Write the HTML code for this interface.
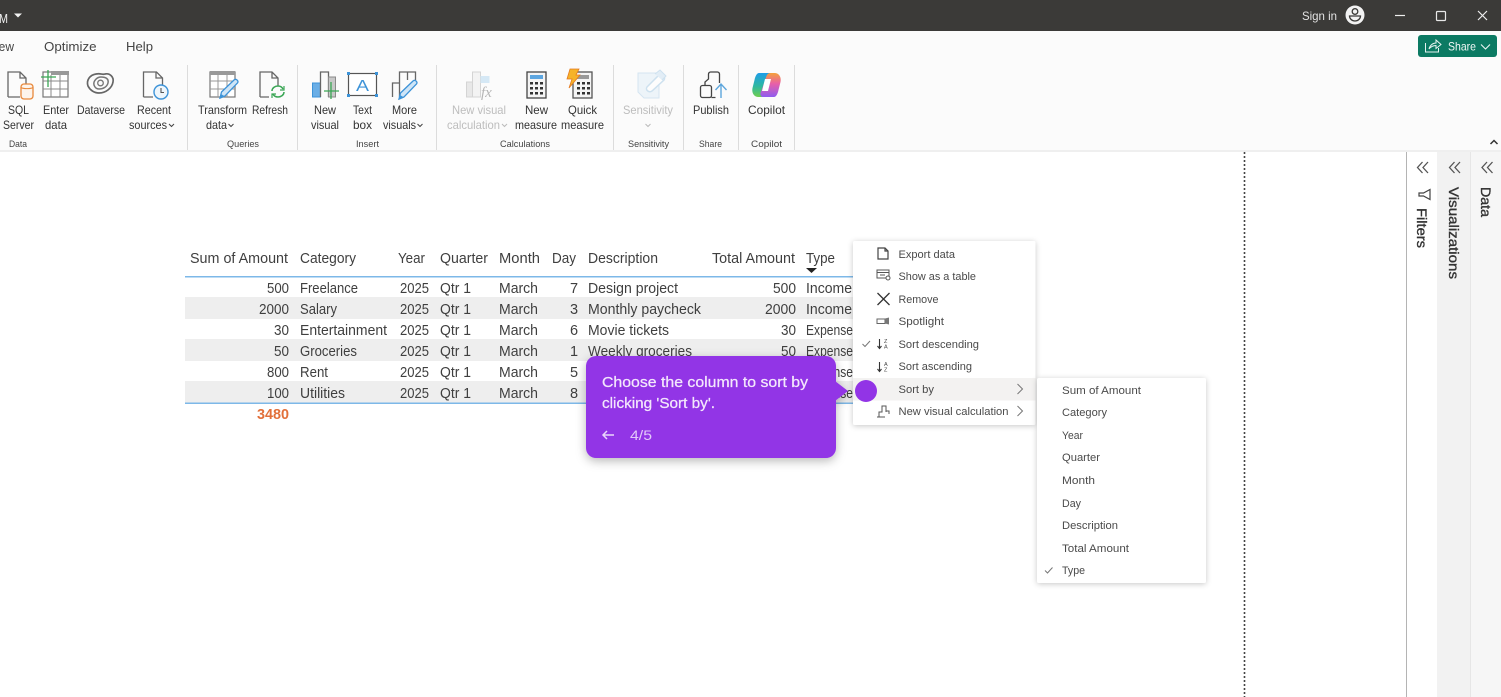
<!DOCTYPE html>
<html lang="en"><head><meta charset="utf-8"><title>Power BI</title>
<style>
html,body{margin:0;padding:0;background:#fff;width:1501px;height:697px;overflow:hidden}
svg{display:block;font-family:"Liberation Sans",sans-serif;filter:blur(.3px)}
.r text{font-size:12px;fill:#333}
.g text{font-size:9.5px;fill:#444}
.d text{font-size:12px;fill:#bdbdbd}
.t text{font-size:14.5px;fill:#3f3f3f}
.m text{font-size:11px;fill:#4a4a4a}
.i{fill:none;stroke:#666;stroke-width:1.3}
</style></head><body>
<svg width="1501" height="697" viewBox="0 0 1501 697" xmlns="http://www.w3.org/2000/svg">
<defs>
<filter id="s" x="-20%" y="-20%" width="140%" height="140%"><feDropShadow dx="0" dy="1" stdDeviation="3" flood-color="#000" flood-opacity=".22"/></filter>
<filter id="s2" x="-20%" y="-20%" width="140%" height="150%"><feDropShadow dx="0" dy="3" stdDeviation="5" flood-color="#000" flood-opacity=".28"/></filter>
<linearGradient id="cl" x1="0" y1="0" x2="0" y2="1"><stop offset="0" stop-color="#1f9de8"/><stop offset=".55" stop-color="#2fb8a0"/><stop offset="1" stop-color="#6fce4f"/></linearGradient>
<linearGradient id="cr" x1="0" y1="0" x2="0" y2="1"><stop offset="0" stop-color="#f5a13a"/><stop offset=".45" stop-color="#e85fa8"/><stop offset="1" stop-color="#8f5cf0"/></linearGradient>
</defs>
<rect width="1501" height="697" fill="#fff"/>

<!-- ribbon -->
<rect y="31" width="1501" height="119" fill="#fbfbfb"/>
<rect y="150" width="1501" height="2" fill="#efefef"/>
<rect width="1501" height="31" fill="#3b3a38"/>
<text x="-1" y="23" font-size="13" fill="#eee" textLength="9" lengthAdjust="spacingAndGlyphs">M</text>
<path d="M14 13.5h8l-4 4z" fill="#f2f2f2"/>
<text x="1302" y="20" font-size="12" fill="#e3e3e3" textLength="35" lengthAdjust="spacingAndGlyphs">Sign in</text>
<circle cx="1355" cy="15" r="9.5" fill="#f2f2f2"/>
<circle cx="1355" cy="11.5" r="2.8" fill="none" stroke="#3b3a38" stroke-width="1.3"/>
<path d="M1349.5 16h11a5.5 5 0 0 1-11 0z" fill="none" stroke="#3b3a38" stroke-width="1.3"/>
<path d="M1395 15.5h10" stroke="#eee" stroke-width="1.2"/>
<rect x="1436.5" y="11.5" width="9" height="9" rx="1" fill="none" stroke="#e8e8e8" stroke-width="1.2"/>
<path d="M1478 11l9 9M1487 11l-9 9" stroke="#eee" stroke-width="1.2"/>

<text x="-4" y="51" font-size="13" fill="#444" textLength="18" lengthAdjust="spacingAndGlyphs">iew</text>
<text x="44" y="51" font-size="13" fill="#444" textLength="52.5" lengthAdjust="spacingAndGlyphs">Optimize</text>
<text x="126" y="51" font-size="13" fill="#444" textLength="27" lengthAdjust="spacingAndGlyphs">Help</text>

<rect x="1418" y="35" width="79" height="22" rx="3" fill="#0c7a63"/>
<path d="M1425.5 43v9h13v-4M1429 49c1-4 4-6 7-6v-3l5 4.5-5 4v-3c-3 0-5 1-7 3.500z" fill="none" stroke="#e6f3f0" stroke-width="1"/>
<text x="1448" y="50.500" font-size="12" fill="#eef7f5" textLength="28" lengthAdjust="spacingAndGlyphs">Share</text>
<path d="M1481 44.500l4.500 4.500 4.500-4.500" fill="none" stroke="#eef7f5" stroke-width="1.1"/>
<path d="M1490.500 144l3.500-3.500 3.500 3.500" fill="none" stroke="#333" stroke-width="1.5"/>

<!-- separators -->
<g stroke="#dcdcdc" stroke-width="1">
<path d="M187.500 65v85M297.500 65v85M436.500 65v85M613.500 65v85M683.500 65v85M738.500 65v85M794.500 65v85"/>
</g>

<!-- icons: data -->
<path class="i" d="M8 97V72h12l6 6v7M26 78h-6v-6M20 97H8"/>
<rect x="21" y="84" width="12" height="15" rx="3" fill="#fdf4ec" stroke="#e8893c" stroke-width="1.3"/>
<path d="M21 87.500c2 1.500 10 1.500 12 0" fill="none" stroke="#e8893c" stroke-width="1.100"/>
<rect x="43" y="72" width="25" height="25" fill="#fff" stroke="#777" stroke-width="1.200"/>
<rect x="51" y="71" width="18" height="4" fill="#999"/>
<path d="M43 81h25M43 89h25M51 75v22M60 75v22" stroke="#888" stroke-width="1"/>
<path d="M48 70v17M41 77h15" stroke="#3aa655" stroke-width="1.300"/>
<path d="M88 86c-2-6 2-11 8-12 5-1 6 1 9 0 5-1 9 3 8 8-1 6-7 11-14 11-5 0-9-3-11-7z" fill="none" stroke="#666" stroke-width="1.700"/>
<path d="M94 85c-1-4 3-8 7-8 5 0 8 2 7 6-1 4-5 6-9 6-2 0-4-1-5-4z" fill="none" stroke="#777" stroke-width="1.500"/>
<circle cx="100.500" cy="83" r="2.800" fill="none" stroke="#777" stroke-width="1.300"/>
<path class="i" d="M143.500 97V72h13l6 6v10M162 78h-6v-6M143.500 97H153"/>
<circle cx="161" cy="92" r="7" fill="#eef6fc" stroke="#3d93d8" stroke-width="1.400"/>
<path d="M161 88v4.500h3" fill="none" stroke="#555" stroke-width="1.100"/>

<!-- queries -->
<rect x="210" y="72" width="25" height="25" fill="#fff" stroke="#777" stroke-width="1.200"/>
<rect x="210" y="71" width="25" height="4" fill="#999"/>
<path d="M210 81h25M210 89h25M218 75v22M227 75v22" stroke="#999" stroke-width="1"/>
<path d="M220 98l1.500-6L234 80c2-2 5 1 3.500 3L225 96z" fill="#cfe5f7" stroke="#3d93d8" stroke-width="1.300"/>
<path d="M219.500 99l1.500-5 4 2.500z" fill="#3d93d8"/>
<path class="i" d="M260 97V72h12l6 6v8M278 78h-6v-6M260 97h9"/>
<path d="M272 91c0-3 3-5 6-5 2 0 4 1 5 3M284 92c0 3-3 5-6 5-2 0-4-1-5-3" fill="none" stroke="#3aa655" stroke-width="1.500"/>
<path d="M284 86v4h-4M272 98v-4h4" fill="none" stroke="#3aa655" stroke-width="1.200"/>

<!-- insert -->
<rect x="312.500" y="83" width="8" height="14" fill="#6aaee6" stroke="#3d93d8"/>
<path class="i" d="M320.500 97V72h8v25"/>
<rect x="328.500" y="77" width="7" height="20" fill="#c8c8c8" stroke="#8a8a8a"/>
<path d="M331 82v17M324 91h15" stroke="#3aa655" stroke-width="1.300"/>
<rect x="348.500" y="73.500" width="28" height="22" fill="#fff" stroke="#555" stroke-width="1.200"/>
<g fill="#3d93d8"><rect x="347" y="72" width="3" height="3"/><rect x="375" y="72" width="3" height="3"/><rect x="347" y="94" width="3" height="3"/><rect x="375" y="94" width="3" height="3"/></g>
<text x="356" y="91" font-size="16" fill="#3d93d8" textLength="13" lengthAdjust="spacingAndGlyphs">A</text>
<path class="i" d="M392.500 97V83h7M399.500 97V72h8v8M407.500 72h8v8"/>
<path d="M399 99l1.500-6L413 81c2-2 5 1 3.500 3L404 97z" fill="#cfe5f7" stroke="#3d93d8" stroke-width="1.300"/>
<path d="M398.500 100l1.500-5 4 2.500z" fill="#3d93d8"/>

<!-- calculations -->
<g opacity=".6">
<rect x="466.500" y="82" width="6" height="15" fill="#ddd" stroke="#bbb"/>
<rect x="472.500" y="72" width="8" height="25" fill="#eee" stroke="#bbb"/>
<rect x="480.500" y="76" width="9" height="7" fill="#bcdcf2"/>
<text x="481" y="97" font-size="15" font-style="italic" font-family="Liberation Serif" fill="#888">fx</text>
</g>
<rect x="527" y="72" width="19" height="26" fill="#f4f4f4" stroke="#444" stroke-width="1.300"/>
<rect x="530" y="75" width="13" height="4" fill="#5da6e0"/>
<g fill="#333"><rect x="530" y="82" width="3" height="2.500"/><rect x="535" y="82" width="3" height="2.500"/><rect x="540" y="82" width="3" height="2.500"/><rect x="530" y="87" width="3" height="2.500"/><rect x="535" y="87" width="3" height="2.500"/><rect x="540" y="87" width="3" height="2.500"/><rect x="530" y="92" width="3" height="2.500"/><rect x="535" y="92" width="3" height="2.500"/><rect x="540" y="92" width="3" height="2.500"/></g>
<rect x="573" y="72" width="19" height="26" fill="#f4f4f4" stroke="#555" stroke-width="1.300"/>
<rect x="576" y="75" width="13" height="4" fill="#999"/>
<g fill="#333"><rect x="577" y="82" width="3" height="2.500"/><rect x="582" y="82" width="3" height="2.500"/><rect x="587" y="82" width="3" height="2.500"/><rect x="577" y="87" width="3" height="2.500"/><rect x="582" y="87" width="3" height="2.500"/><rect x="587" y="87" width="3" height="2.500"/><rect x="577" y="92" width="3" height="2.500"/><rect x="582" y="92" width="3" height="2.500"/><rect x="587" y="92" width="3" height="2.500"/></g>
<path d="M570 69h9l-3 6h4l-11 13 3-9h-5z" fill="#f5b32a" stroke="#e57a1e" stroke-width=".8"/>

<!-- sensitivity -->
<g opacity=".55">
<path d="M638 73h21v25h-15l-6-6z" fill="#e3eff8" stroke="#b7d4ea"/>
<path d="M647 87l12-12c3-2 7 2 5 5l-12 11c-3 2-7-1-5-4z" fill="#fff" stroke="#a9cce6" stroke-width="1.500"/>
<path d="M655 74l5-4 6 6-4 4" fill="#cfe3f2" stroke="#a9cce6"/>
</g>

<!-- publish -->
<rect x="700.500" y="85.500" width="11" height="12" rx="2" fill="none" stroke="#444" stroke-width="1.300"/>
<path d="M705 85v-3l3.500-3V74c0-1 1-2 2-2h7c1 0 2 1 2 2v9M711.500 97.500h4" fill="none" stroke="#444" stroke-width="1.300"/>
<path d="M721 98V84M715.500 90l5.500-6 5.500 6" fill="none" stroke="#5ea6dc" stroke-width="1.400"/>

<!-- copilot -->
<path d="M759 73h11c2 0 3 2 2.500 4l-6 17c-.7 2-2 3-4 3h-4c-4.500 0-7-4-6-9l2-8c.8-4 2.500-7 4.500-7z" fill="url(#cl)"/>
<path d="M774 97h-11c-2 0-3-2-2.500-4l6-17c.7-2 2-3 4-3h4c4.500 0 7 4 6 9l-2 8c-.8 4-2.500 7-4.500 7z" fill="url(#cr)" transform="rotate(0)"/>
<path d="M765 79h6l-3 12h-6z" fill="#fff"/>

<!-- ribbon labels -->
<g class="r">
<text x="8" y="114" textLength="21" lengthAdjust="spacingAndGlyphs">SQL</text>
<text x="3" y="129" textLength="31" lengthAdjust="spacingAndGlyphs">Server</text>
<text x="43" y="114" textLength="26" lengthAdjust="spacingAndGlyphs">Enter</text>
<text x="45" y="129" textLength="22" lengthAdjust="spacingAndGlyphs">data</text>
<text x="77" y="114" textLength="48" lengthAdjust="spacingAndGlyphs">Dataverse</text>
<text x="137" y="114" textLength="34" lengthAdjust="spacingAndGlyphs">Recent</text>
<text x="129" y="129" textLength="38" lengthAdjust="spacingAndGlyphs">sources</text>
<text x="198" y="114" textLength="49" lengthAdjust="spacingAndGlyphs">Transform</text>
<text x="206" y="129" textLength="21" lengthAdjust="spacingAndGlyphs">data</text>
<text x="252" y="114" textLength="36" lengthAdjust="spacingAndGlyphs">Refresh</text>
<text x="314" y="114" textLength="22" lengthAdjust="spacingAndGlyphs">New</text>
<text x="311" y="129" textLength="28" lengthAdjust="spacingAndGlyphs">visual</text>
<text x="353" y="114" textLength="19" lengthAdjust="spacingAndGlyphs">Text</text>
<text x="353" y="129" textLength="19" lengthAdjust="spacingAndGlyphs">box</text>
<text x="392" y="114" textLength="25" lengthAdjust="spacingAndGlyphs">More</text>
<text x="383" y="129" textLength="33" lengthAdjust="spacingAndGlyphs">visuals</text>
<text x="525" y="114" textLength="23" lengthAdjust="spacingAndGlyphs">New</text>
<text x="515" y="129" textLength="42" lengthAdjust="spacingAndGlyphs">measure</text>
<text x="568" y="114" textLength="29" lengthAdjust="spacingAndGlyphs">Quick</text>
<text x="561" y="129" textLength="43" lengthAdjust="spacingAndGlyphs">measure</text>
<text x="693" y="114" textLength="36" lengthAdjust="spacingAndGlyphs">Publish</text>
<text x="748" y="114" textLength="37" lengthAdjust="spacingAndGlyphs">Copilot</text>
</g>
<g class="d">
<text x="452" y="114" textLength="54" lengthAdjust="spacingAndGlyphs">New visual</text>
<text x="447" y="129" textLength="53" lengthAdjust="spacingAndGlyphs">calculation</text>
<text x="623" y="114" textLength="50" lengthAdjust="spacingAndGlyphs">Sensitivity</text>
</g>
<g fill="none" stroke="#444" stroke-width="1">
<path d="M169 124l2.500 2.500 2.500-2.500M228.500 124l2.500 2.500 2.500-2.500M417.500 124l2.500 2.500 2.500-2.500"/>
<path stroke="#bbb" d="M502 124l2.500 2.500 2.500-2.500M645.500 124l2.500 2.500 2.500-2.500"/>
</g>
<g class="g">
<text x="9" y="147" textLength="18" lengthAdjust="spacingAndGlyphs">Data</text>
<text x="227" y="147" textLength="32" lengthAdjust="spacingAndGlyphs">Queries</text>
<text x="356" y="147" textLength="23" lengthAdjust="spacingAndGlyphs">Insert</text>
<text x="500" y="147" textLength="50" lengthAdjust="spacingAndGlyphs">Calculations</text>
<text x="628" y="147" textLength="41" lengthAdjust="spacingAndGlyphs">Sensitivity</text>
<text x="699" y="147" textLength="23" lengthAdjust="spacingAndGlyphs">Share</text>
<text x="751" y="147" textLength="31" lengthAdjust="spacingAndGlyphs">Copilot</text>
</g>

<!-- canvas and panes -->
<path d="M1244.500 152V697" stroke="#444" stroke-width="1.600" stroke-dasharray="2 2"/>
<rect x="1406" y="152" width="1" height="545" fill="#b4b4b4"/>
<rect x="1437" y="152" width="34" height="545" fill="#f2f2f2"/>
<rect x="1470" y="152" width="1" height="545" fill="#e6e6e6"/>
<rect x="1471" y="152" width="30" height="545" fill="#f6f6f6"/>
<path d="M1422.500 162l-5 5.500 5 5.500M1428 162l-5 5.500 5 5.500M1454.500 162l-5 5.500 5 5.500M1460 162l-5 5.500 5 5.500M1487 162l-5 5.500 5 5.500M1492.500 162l-5 5.500 5 5.500" fill="none" stroke="#555" stroke-width="1.300"/>
<path d="M1430 189.500v10l-6.500-3.500H1419v-3h4.500z" fill="none" stroke="#444" stroke-width="1.200"/>
<g font-size="13.500" fill="#333" stroke="#333" stroke-width=".35">
<text transform="translate(1417 208) rotate(90)" textLength="40" lengthAdjust="spacingAndGlyphs">Filters</text>
<text transform="translate(1449 187) rotate(90)" textLength="92" lengthAdjust="spacingAndGlyphs">Visualizations</text>
<text transform="translate(1481 187) rotate(90)" textLength="30" lengthAdjust="spacingAndGlyphs">Data</text>
</g>

<!-- table -->
<rect x="185" y="297" width="668" height="22" fill="#eeeeee"/>
<rect x="185" y="339" width="668" height="22" fill="#eeeeee"/>
<rect x="185" y="381" width="668" height="21.500" fill="#eeeeee"/>
<rect x="185" y="276" width="668" height="1.500" fill="#7db8e8"/>
<rect x="185" y="402.500" width="668" height="1.500" fill="#7db8e8"/>
<g class="t">
<text x="190" y="263" textLength="98" lengthAdjust="spacingAndGlyphs">Sum of Amount</text>
<text x="300" y="263" textLength="56" lengthAdjust="spacingAndGlyphs">Category</text>
<text x="398" y="263" textLength="27" lengthAdjust="spacingAndGlyphs">Year</text>
<text x="440" y="263" textLength="48" lengthAdjust="spacingAndGlyphs">Quarter</text>
<text x="499" y="263" textLength="41" lengthAdjust="spacingAndGlyphs">Month</text>
<text x="552" y="263" textLength="24" lengthAdjust="spacingAndGlyphs">Day</text>
<text x="588" y="263" textLength="70" lengthAdjust="spacingAndGlyphs">Description</text>
<text x="712" y="263" textLength="83" lengthAdjust="spacingAndGlyphs">Total Amount</text>
<text x="806" y="263" textLength="29" lengthAdjust="spacingAndGlyphs">Type</text>

<text x="267" y="293" textLength="22" lengthAdjust="spacingAndGlyphs">500</text>
<text x="300" y="293" textLength="58" lengthAdjust="spacingAndGlyphs">Freelance</text>
<text x="400" y="293" textLength="29" lengthAdjust="spacingAndGlyphs">2025</text>
<text x="440" y="293" textLength="31" lengthAdjust="spacingAndGlyphs">Qtr 1</text>
<text x="499" y="293" textLength="39" lengthAdjust="spacingAndGlyphs">March</text>
<text x="570" y="293">7</text>
<text x="588" y="293" textLength="90" lengthAdjust="spacingAndGlyphs">Design project</text>
<text x="773" y="293" textLength="23" lengthAdjust="spacingAndGlyphs">500</text>
<text x="806" y="293" textLength="46" lengthAdjust="spacingAndGlyphs">Income</text>

<text x="259" y="314" textLength="30" lengthAdjust="spacingAndGlyphs">2000</text>
<text x="300" y="314" textLength="37" lengthAdjust="spacingAndGlyphs">Salary</text>
<text x="400" y="314" textLength="29" lengthAdjust="spacingAndGlyphs">2025</text>
<text x="440" y="314" textLength="31" lengthAdjust="spacingAndGlyphs">Qtr 1</text>
<text x="499" y="314" textLength="39" lengthAdjust="spacingAndGlyphs">March</text>
<text x="570" y="314">3</text>
<text x="588" y="314" textLength="113" lengthAdjust="spacingAndGlyphs">Monthly paycheck</text>
<text x="765" y="314" textLength="31" lengthAdjust="spacingAndGlyphs">2000</text>
<text x="806" y="314" textLength="46" lengthAdjust="spacingAndGlyphs">Income</text>

<text x="274" y="335" textLength="15" lengthAdjust="spacingAndGlyphs">30</text>
<text x="300" y="335" textLength="87" lengthAdjust="spacingAndGlyphs">Entertainment</text>
<text x="400" y="335" textLength="29" lengthAdjust="spacingAndGlyphs">2025</text>
<text x="440" y="335" textLength="31" lengthAdjust="spacingAndGlyphs">Qtr 1</text>
<text x="499" y="335" textLength="39" lengthAdjust="spacingAndGlyphs">March</text>
<text x="570" y="335">6</text>
<text x="588" y="335" textLength="81" lengthAdjust="spacingAndGlyphs">Movie tickets</text>
<text x="781" y="335" textLength="15" lengthAdjust="spacingAndGlyphs">30</text>
<text x="806" y="335" textLength="47" lengthAdjust="spacingAndGlyphs">Expense</text>

<text x="274" y="356" textLength="15" lengthAdjust="spacingAndGlyphs">50</text>
<text x="300" y="356" textLength="57" lengthAdjust="spacingAndGlyphs">Groceries</text>
<text x="400" y="356" textLength="29" lengthAdjust="spacingAndGlyphs">2025</text>
<text x="440" y="356" textLength="31" lengthAdjust="spacingAndGlyphs">Qtr 1</text>
<text x="499" y="356" textLength="39" lengthAdjust="spacingAndGlyphs">March</text>
<text x="570" y="356">1</text>
<text x="588" y="356" textLength="104" lengthAdjust="spacingAndGlyphs">Weekly groceries</text>
<text x="781" y="356" textLength="15" lengthAdjust="spacingAndGlyphs">50</text>
<text x="806" y="356" textLength="47" lengthAdjust="spacingAndGlyphs">Expense</text>

<text x="267" y="377" textLength="22" lengthAdjust="spacingAndGlyphs">800</text>
<text x="300" y="377" textLength="28" lengthAdjust="spacingAndGlyphs">Rent</text>
<text x="400" y="377" textLength="29" lengthAdjust="spacingAndGlyphs">2025</text>
<text x="440" y="377" textLength="31" lengthAdjust="spacingAndGlyphs">Qtr 1</text>
<text x="499" y="377" textLength="39" lengthAdjust="spacingAndGlyphs">March</text>
<text x="570" y="377">5</text>
<text x="806" y="377" textLength="47" lengthAdjust="spacingAndGlyphs">Expense</text>

<text x="267" y="398" textLength="22" lengthAdjust="spacingAndGlyphs">100</text>
<text x="300" y="398" textLength="45" lengthAdjust="spacingAndGlyphs">Utilities</text>
<text x="400" y="398" textLength="29" lengthAdjust="spacingAndGlyphs">2025</text>
<text x="440" y="398" textLength="31" lengthAdjust="spacingAndGlyphs">Qtr 1</text>
<text x="499" y="398" textLength="39" lengthAdjust="spacingAndGlyphs">March</text>
<text x="570" y="398">8</text>
<text x="806" y="398" textLength="47" lengthAdjust="spacingAndGlyphs">Expense</text>
</g>
<text x="257" y="419" font-size="14.500" font-weight="bold" fill="#e2703a" textLength="32" lengthAdjust="spacingAndGlyphs">3480</text>
<path d="M806 268h11l-5.500 5z" fill="#222"/>

<!-- context menu -->
<rect x="853" y="241" width="182.500" height="184" rx="2" fill="#fff" filter="url(#s)"/>
<rect x="853" y="378" width="182.500" height="22.500" fill="#f3f2f1"/>
<g class="m">
<text x="898.500" y="258" textLength="56.500" lengthAdjust="spacingAndGlyphs">Export data</text>
<text x="898.500" y="280" textLength="77.500" lengthAdjust="spacingAndGlyphs">Show as a table</text>
<text x="898.500" y="303" textLength="40" lengthAdjust="spacingAndGlyphs">Remove</text>
<text x="898.500" y="325" textLength="45.500" lengthAdjust="spacingAndGlyphs">Spotlight</text>
<text x="898.500" y="348" textLength="80.500" lengthAdjust="spacingAndGlyphs">Sort descending</text>
<text x="898.500" y="370" textLength="73.500" lengthAdjust="spacingAndGlyphs">Sort ascending</text>
<text x="898.500" y="393" textLength="35.500" lengthAdjust="spacingAndGlyphs">Sort by</text>
<text x="898.500" y="415" textLength="110" lengthAdjust="spacingAndGlyphs">New visual calculation</text>
</g>
<path d="M878 248h7l3 3v8h-10zM885 248v3h3" fill="none" stroke="#444" stroke-width="1.200"/>
<rect x="877" y="270" width="12" height="8" fill="none" stroke="#555"/><path d="M877 272.500h12M880 275h5" stroke="#555"/><circle cx="888" cy="278" r="2" fill="#fff" stroke="#555"/>
<path d="M877.500 293l12 12M889.500 293l-12 12" stroke="#333" stroke-width="1.300"/>
<path d="M877 319h8v4.500h-8z" fill="none" stroke="#666" stroke-width="1"/><path d="M885 318.500l4-1v7l-4-1z" fill="#777"/>
<path d="M879.500 339v9M877.500 346l2 2.500 2-2.500M879.500 362v9M877.500 369l2 2.500 2-2.500" fill="none" stroke="#333" stroke-width="1.100"/>
<text x="884" y="343" font-size="5.500" fill="#444">Z</text><text x="884" y="348.500" font-size="5.500" fill="#444">A</text>
<text x="884" y="366" font-size="5.500" fill="#444">A</text><text x="884" y="371.500" font-size="5.500" fill="#444">Z</text>
<path d="M862.500 344l2.500 2.500 5-5.500" fill="none" stroke="#777"/>
<path d="M879 417v-5h3v-6h4v6M886 411h3v3M877 417h8" fill="none" stroke="#555" stroke-width="1"/>
<path d="M1017.500 384l5 5-5 5M1017.500 406l5 5-5 5" fill="none" stroke="#777"/>

<!-- submenu -->
<rect x="1037" y="378" width="169" height="205" rx="2" fill="#fff" filter="url(#s)"/>
<g class="m">
<text x="1062" y="394" textLength="79" lengthAdjust="spacingAndGlyphs">Sum of Amount</text>
<text x="1062" y="416" textLength="45" lengthAdjust="spacingAndGlyphs">Category</text>
<text x="1062" y="439" textLength="21" lengthAdjust="spacingAndGlyphs">Year</text>
<text x="1062" y="461" textLength="38" lengthAdjust="spacingAndGlyphs">Quarter</text>
<text x="1062" y="484" textLength="33" lengthAdjust="spacingAndGlyphs">Month</text>
<text x="1062" y="507" textLength="19" lengthAdjust="spacingAndGlyphs">Day</text>
<text x="1062" y="529" textLength="56" lengthAdjust="spacingAndGlyphs">Description</text>
<text x="1062" y="552" textLength="67" lengthAdjust="spacingAndGlyphs">Total Amount</text>
<text x="1062" y="574" textLength="23" lengthAdjust="spacingAndGlyphs">Type</text>
</g>
<path d="M1045 570.500l2.500 2.500 5-5.500" fill="none" stroke="#777"/>

<!-- tooltip -->
<g filter="url(#s2)">
<rect x="586" y="356" width="250" height="102" rx="10" fill="#9234e6"/>
<path d="M835 381l13 10-13 10z" fill="#9234e6"/>
</g>
<text x="602" y="387" font-size="14.500" fill="#f3e7fc" stroke="#f3e7fc" stroke-width=".25" textLength="206" lengthAdjust="spacingAndGlyphs">Choose the column to sort by</text>
<text x="602" y="408" font-size="14.500" fill="#f3e7fc" stroke="#f3e7fc" stroke-width=".25" textLength="113" lengthAdjust="spacingAndGlyphs">clicking 'Sort by'.</text>
<path d="M603 435h11M607 431l-4 4 4 4" fill="none" stroke="#ead6fb" stroke-width="1.500"/>
<text x="630" y="440" font-size="13.500" fill="#e3c9f9" textLength="22" lengthAdjust="spacingAndGlyphs">4/5</text>
<circle cx="866" cy="391" r="11" fill="#9234e6"/>
</svg>
</body></html>
